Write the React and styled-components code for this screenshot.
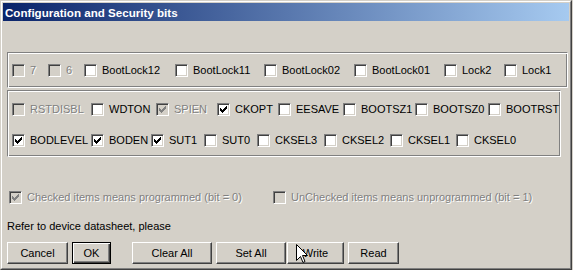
import React from "react";
import styled, { createGlobalStyle, css } from "styled-components";

const GlobalStyle = createGlobalStyle`
  html, body { margin: 0; padding: 0; background: #d4d0c8; }
  body { font-family: "Liberation Sans", Arial, sans-serif; font-size: 11px; color: #000; }
`;

const Window = styled.div`
  position: relative;
  width: 572px;
  height: 270px;
  box-sizing: border-box;
  background: #d4d0c8;
  border-top: 1px solid #d4d0c8;
  border-left: 1px solid #d4d0c8;
  border-right: 1px solid #404040;
  border-bottom: 1px solid #404040;
  overflow: hidden;
`;

const Inner = styled.div`
  height: 100%;
  box-sizing: border-box;
  border-top: 1px solid #fff;
  border-left: 1px solid #fff;
  border-right: 1px solid #808080;
  border-bottom: 1px solid #808080;
  padding: 1px 1px 0 1px;
  display: flex;
  flex-direction: column;
`;

const TitleBar = styled.div`
  height: 18px;
  flex-shrink: 0;
  background: linear-gradient(to right, #0a246a, #a6caf0);
  color: #fff;
  font-weight: bold;
  font-size: 11.6px;
  display: flex;
  align-items: center;
  padding-left: 2px;
`;

const Body = styled.div`
  display: flex;
  flex-direction: column;
  padding: 0 0 0 4px;
`;

const Group = styled.div`
  margin-top: ${(p) => p.$top}px;
  margin-right: ${(p) => p.$right}px;
  height: ${(p) => p.$height}px;
  box-sizing: border-box;
  border-top: 1px solid #808080;
  border-left: 1px solid #808080;
  border-right: 1px solid #fff;
  border-bottom: 1px solid #fff;
  box-shadow: inset 1px 1px 0 #fff, inset -1px -1px 0 #808080;
  display: flex;
  flex-direction: column;
  justify-content: ${(p) => (p.$rows > 1 ? "space-between" : "center")};
  padding: ${(p) => (p.$rows > 1 ? "12px 0 9px 0" : "0")};
`;

const Row = styled.div`
  display: flex;
  align-items: center;
  padding-left: 4px;
  height: 13px;
`;

const Item = styled.label`
  display: flex;
  align-items: center;
  gap: 5px;
  width: ${(p) => (p.$w ? `${p.$w}px` : "auto")};
  flex-shrink: 0;
  white-space: nowrap;
`;

const Box = styled.span`
  position: relative;
  width: 13px;
  height: 13px;
  box-sizing: border-box;
  flex-shrink: 0;
  background: ${(p) => (p.$disabled ? "#d4d0c8" : "#fff")};
  border-top: 1px solid #808080;
  border-left: 1px solid #808080;
  border-right: 1px solid #fff;
  border-bottom: 1px solid #fff;
  box-shadow: inset 1px 1px 0 #404040, inset -1px -1px 0 #d4d0c8;
`;

const Tick = styled.svg`
  position: absolute;
  left: 2px;
  top: 2px;
`;

const Label = styled.span`
  line-height: 13px;
  ${(p) =>
    p.$disabled &&
    css`
      color: #808080;
      text-shadow: 1px 1px 0 #fff;
    `}
`;

const Legend = styled.div`
  display: flex;
  margin-top: 34px;
  padding-left: 2px;
  height: 13px;
`;

const Note = styled.div`
  margin-top: 16px;
  line-height: 13px;
  padding-left: 0;
`;

const ButtonBar = styled.div`
  display: flex;
  margin-top: 9px;
`;

const Button = styled.button`
  width: ${(p) => p.$w}px;
  height: 22px;
  margin-left: ${(p) => p.$gap}px;
  padding: 0;
  box-sizing: border-box;
  background: #d4d0c8;
  font-family: "Liberation Sans", Arial, sans-serif;
  font-size: 11px;
  color: #000;
  border-top: 1px solid #fff;
  border-left: 1px solid #fff;
  border-right: 1px solid #404040;
  border-bottom: 1px solid #404040;
  box-shadow: inset -1px -1px 0 #808080, inset 1px 1px 0 #d4d0c8;
  ${(p) =>
    p.$default &&
    css`
      outline: 1px solid #000;
      outline-offset: -1px;
      box-shadow: inset 1px 1px 0 #fff, inset -1px -1px 0 #404040,
        inset -2px -2px 0 #808080;
    `}
`;

const Cursor = styled.svg`
  position: absolute;
  left: 295px;
  top: 243px;
`;

const Check = ({ label, w, checked, disabled }) => (
  <Item $w={w}>
    <Box $disabled={disabled}>
      {checked && (
        <Tick width="7" height="7" viewBox="0 0 7 7">
          <path
            d="M0 2h1v1h1v1h1v-1h1v-1h1v-1h1v-1h1v3h-1v1h-1v1h-1v1h-1v1h-1v-1h-1v-1h-1z"
            fill={disabled ? "#808080" : "#000"}
          />
        </Tick>
      )}
    </Box>
    <Label $disabled={disabled}>{label}</Label>
  </Item>
);

const lockRow = [
  { label: "7", w: 36, disabled: true },
  { label: "6", w: 36, disabled: true },
  { label: "BootLock12", w: 91 },
  { label: "BootLock11", w: 89 },
  { label: "BootLock02", w: 90 },
  { label: "BootLock01", w: 90 },
  { label: "Lock2", w: 60 },
  { label: "Lock1" },
];

const fuseRow1 = [
  { label: "RSTDISBL", w: 79, disabled: true },
  { label: "WDTON", w: 65 },
  { label: "SPIEN", w: 61, disabled: true, checked: true },
  { label: "CKOPT", w: 61, checked: true },
  { label: "EESAVE", w: 65 },
  { label: "BOOTSZ1", w: 72 },
  { label: "BOOTSZ0", w: 73 },
  { label: "BOOTRST" },
];

const fuseRow2 = [
  { label: "BODLEVEL", w: 79, checked: true },
  { label: "BODEN", w: 60, checked: true },
  { label: "SUT1", w: 53, checked: true },
  { label: "SUT0", w: 53 },
  { label: "CKSEL3", w: 67 },
  { label: "CKSEL2", w: 66 },
  { label: "CKSEL1", w: 66 },
  { label: "CKSEL0" },
];

const renderRow = (items) => (
  <Row>
    {items.map((it) => (
      <Check key={it.label} {...it} />
    ))}
  </Row>
);

export default function App() {
  return (
    <>
      <GlobalStyle />
      <Window>
        <Inner>
          <TitleBar>Configuration and Security bits</TitleBar>
          <Body>
            <Group $top={31} $right={1} $height={36} $rows={1}>
              {renderRow(lockRow)}
            </Group>
            <Group $top={2} $right={8} $height={67} $rows={2}>
              {renderRow(fuseRow1)}
              {renderRow(fuseRow2)}
            </Group>
            <Legend>
              <Check
                label="Checked items means programmed (bit = 0)"
                w={264}
                checked
                disabled
              />
              <Check
                label="UnChecked items means unprogrammed (bit = 1)"
                disabled
              />
            </Legend>
            <Note>Refer to device datasheet, please</Note>
            <ButtonBar>
              <Button $w={61} $gap={0}>Cancel</Button>
              <Button $w={39} $gap={4} $default>OK</Button>
              <Button $w={80} $gap={21}>Clear All</Button>
              <Button $w={70} $gap={4}>Set All</Button>
              <Button $w={57} $gap={1}>Write</Button>
              <Button $w={51} $gap={4}>Read</Button>
            </ButtonBar>
          </Body>
        </Inner>
        <Cursor width="12" height="20" viewBox="0 0 12 20">
          <path
            d="M0.5 0.5 L0.5 16.5 L4.5 12.5 L7 18.5 L9 17.5 L6.5 11.5 L11.5 11.5 Z"
            fill="#fff"
            stroke="#000"
            strokeWidth="1"
          />
        </Cursor>
      </Window>
    </>
  );
}
